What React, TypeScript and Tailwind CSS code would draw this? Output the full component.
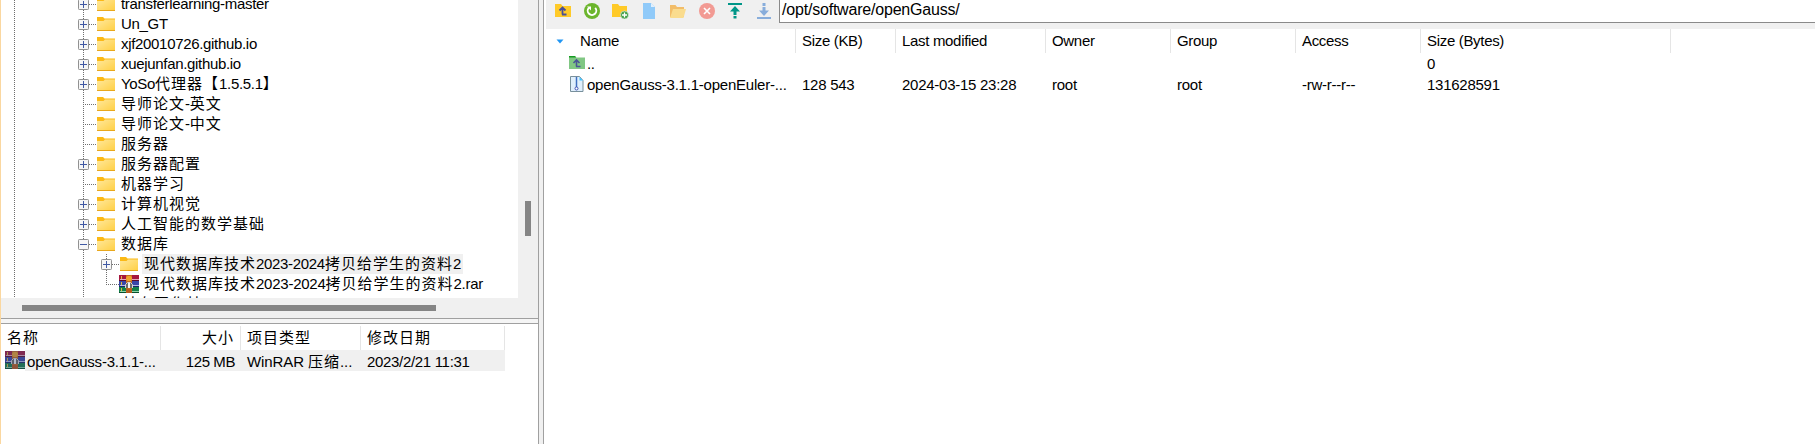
import React from "react";

const isCjk = /([\u2e80-\u3009\u300c-\u9fff]+)/;

function T({
  children,
  className = "",
  spacing = "tracking-[-0.32px]",
}: {
  children: string;
  className?: string;
  spacing?: string;
}) {
  return (
    <span className={"whitespace-pre text-[15px] leading-[20px] " + spacing + " " + className}>
      {children.split(isCjk).map((part, i) =>
        isCjk.test(part) ? (
          <span key={i} className="text-[15px] tracking-[1px]">{part}</span>
        ) : (
          <span key={i}>{part}</span>
        ),
      )}
    </span>
  );
}

function Folder() {
  return (
    <svg width="18" height="15" viewBox="0 0 18 15" className="block shrink-0">
      <defs>
        <linearGradient id="fold" x1="0" y1="0" x2="1" y2="1">
          <stop offset="0" stopColor="#ffe89c" />
          <stop offset="1" stopColor="#ffcf43" />
        </linearGradient>
      </defs>
      <path d="M0 0H6L7.500 1.500H18V5H0Z" fill="#fbb916" />
      <path d="M0 4H6.500L8 2.500H18V14H0Z" fill="url(#fold)" />
      <path d="M0 13H18V14H0Z" fill="#e9a81c" />
    </svg>
  );
}

function Rar({ selected = false }: { selected?: boolean }) {
  return (
    <svg width="20" height="18" viewBox="0 0 20 18" className="block shrink-0">
      <rect x="0" y="0" width="20" height="6" fill="#a5173f" />
      <rect x="1" y="4" width="19" height="1" fill="#e3a9bb" />
      <rect x="0" y="5" width="20" height="1" fill="#5f0a2a" />
      <rect x="0" y="6" width="20" height="6" fill="#3a46a8" />
      <rect x="1" y="10" width="19" height="1" fill="#b3bdea" />
      <rect x="0" y="11" width="20" height="1" fill="#1c2468" />
      <rect x="0" y="12" width="20" height="6" fill="#14804a" />
      <rect x="1" y="16" width="19" height="1" fill="#8fd3a8" />
      <rect x="0" y="17" width="20" height="1" fill="#07502b" />
      <path d="M2.500 1v3M2.500 7v3M2.500 13v3" stroke="#e0b93c" />
      <rect x="7" y="0" width="6" height="18" fill="#c46a20" />
      <rect x="7" y="1" width="6" height="5" rx="2" fill="#f0a52c" />
      <path d="M6.500 13V9.500L8.500 7.500h3l2 2V13" fill="#6b6b6b" stroke="#d9d9d9" />
      <rect x="9" y="8" width="2" height="5" fill="#f4f4f4" />
      <rect x="7" y="14" width="6" height="4" fill="#b85a1e" />
      {selected && <rect width="20" height="18" fill="#3b4b74" opacity=".35" />}
    </svg>
  );
}

function Expander({ open = false }: { open?: boolean }) {
  return (
    <svg width="11" height="11" viewBox="0 0 11 11" className="absolute -left-[5px] top-[5px] block">
      <rect x=".5" y=".5" width="10" height="10" rx=".8" fill="#f6f6f6" stroke="#919191" />
      <path d={open ? "M2 5.5H9" : "M2 5.5H9M5.500 2V9"} stroke="#4059a3" fill="none" />
    </svg>
  );
}

function VDots({ h = "h-[20px]" }: { h?: string }) {
  return (
    <div
      className={
        "w-px shrink-0 bg-[repeating-linear-gradient(to_bottom,#6e6e6e_0px,#6e6e6e_1px,transparent_1px,transparent_2px)] " + h
      }
    />
  );
}

function HDots() {
  return (
    <div className="mt-[10px] h-px w-[13px] shrink-0 bg-[repeating-linear-gradient(to_right,transparent_0px,transparent_1px,#6e6e6e_1px,#6e6e6e_2px)]" />
  );
}

function Guides() {
  return (
    <>
      <div className="w-[13px] shrink-0" />
      <VDots />
      <div className="w-[68px] shrink-0" />
    </>
  );
}

type Mark = "plus" | "minus" | "none";

function Node({ label, mark }: { label: string; mark: Mark }) {
  return (
    <div className="flex h-[20px] shrink-0">
      <Guides />
      <div className="relative flex w-[14px] shrink-0">
        <VDots />
        <HDots />
        {mark !== "none" && <Expander open={mark === "minus"} />}
      </div>
      <div className="pt-[3px]"><Folder /></div>
      <T className="pl-[6px]">{label}</T>
    </div>
  );
}

const nodes: [string, Mark][] = [
  ["transferlearning-master", "plus"],
  ["Un_GT", "plus"],
  ["xjf20010726.github.io", "plus"],
  ["xuejunfan.github.io", "plus"],
  ["YoSo代理器【1.5.5.1】", "plus"],
  ["导师论文-英文", "none"],
  ["导师论文-中文", "none"],
  ["服务器", "none"],
  ["服务器配置", "plus"],
  ["机器学习", "none"],
  ["计算机视觉", "plus"],
  ["人工智能的数学基础", "plus"],
  ["数据库", "minus"],
];

function Tree() {
  return (
    <div className="h-[298px] w-[517px] overflow-hidden bg-white">
      <div className="-mt-[6px] flex flex-col">
        {nodes.map(([label, mark]) => <Node key={label} label={label} mark={mark} />)}
        <div className="flex h-[20px] shrink-0">
          <Guides />
          <VDots />
          <div className="w-[22px] shrink-0" />
          <div className="relative flex w-[14px] shrink-0">
            <VDots />
            <HDots />
            <Expander />
          </div>
          <div className="pt-[3px]"><Folder /></div>
          <div className="ml-[4px] flex w-[321px] bg-[#f0f0f0] pl-[2px]"><T>现代数据库技术2023-2024拷贝给学生的资料2</T></div>
        </div>
        <div className="flex h-[20px] shrink-0">
          <Guides />
          <VDots />
          <div className="w-[22px] shrink-0" />
          <div className="flex w-[13px] shrink-0">
            <VDots h="h-[11px]" />
            <HDots />
          </div>
          <div className="pt-[1px]"><Rar /></div>
          <T className="pl-[5px]" spacing="tracking-[-0.25px]">现代数据库技术2023-2024拷贝给学生的资料2.rar</T>
        </div>
        <div className="flex h-[20px] shrink-0">
          <Guides />
          <VDots />
          <T className="pl-[38px]">其右图化其</T>
        </div>
      </div>
    </div>
  );
}

function LocalList() {
  return (
    <div className="flex h-[120px] flex-col bg-white">
      <div className="flex h-[26px] items-end">
        <div className="flex h-[24px] w-[160px] border-r border-[#e5e5e5] pl-[6px]"><T className="pt-[2px]">名称</T></div>
        <div className="flex h-[24px] w-[80px] justify-end border-r border-[#e5e5e5] pr-[6px]"><T className="pt-[2px]">大小</T></div>
        <div className="flex h-[24px] w-[120px] border-r border-[#e5e5e5] pl-[6px]"><T className="pt-[2px]">项目类型</T></div>
        <div className="flex h-[24px] w-[144px] border-r border-[#e5e5e5] pl-[6px]"><T className="pt-[2px]">修改日期</T></div>
      </div>
      <div className="flex h-[21px] items-start">
        <div className="w-[4px]" />
        <div className="pt-[1px]"><Rar selected /></div>
        <div className="flex h-[21px] w-[480px] bg-[#f0f0f0]">
          <T className="w-[136px] pl-[2px] pt-[2px]" spacing="tracking-[-0.2px]">openGauss-3.1.1-...</T>
          <T className="w-[74px] pt-[2px] text-right" spacing="tracking-[-0.42px]">125 MB</T>
          <T className="w-[132px] pl-[12px] pt-[2px]" spacing="tracking-[-0.1px]">WinRAR 压缩...</T>
          <T className="pt-[2px]">2023/2/21 11:31</T>
        </div>
      </div>
    </div>
  );
}

function Toolbar() {
  return (
    <div className="flex h-[29px] items-start bg-[#f0f0f0]">
      <svg width="233" height="29" viewBox="546 0 233 29" className="block shrink-0">
        <path d="M555 4h6l1.500 2H571v11H555z" fill="#ffca28" />
        <path d="M562.500 14.500V8M559.500 10.500l3-3 3 3M562 14.500h4.500" stroke="#4a4f96" strokeWidth="1.800" fill="none" />
        <circle cx="592" cy="11" r="8" fill="#6cb52d" />
        <path d="M595.200 7.800a4.300 4.300 0 1 1 -6.400 0" stroke="#fff" strokeWidth="1.900" fill="none" />
        <path d="M587 6.500h4v4z" fill="#fff" />
        <path d="M612 4h6l1.500 2H627v11H612z" fill="#ffca28" />
        <circle cx="624.500" cy="15" r="4" fill="#43a047" stroke="#f0f0f0" strokeWidth=".6" />
        <path d="M622 15h5M624.500 12.500v5" stroke="#fff" strokeWidth="1.300" />
        <path d="M643 3h8l4 4v12H643z" fill="#90caf9" />
        <path d="M651 3v4h4z" fill="#e1f0fd" />
        <path d="M670 5h5.500l1.500 2h7v10H670z" fill="#f2bd69" />
        <path d="M673 9h13l-2.500 9H670z" fill="#fadc8e" />
        <circle cx="707" cy="11" r="8" fill="#f29a93" />
        <path d="M704 8l6 6M710 8l-6 6" stroke="#fff" strokeWidth="1.600" />
        <path d="M728 3h14v2H728z" fill="#009688" />
        <path d="M735 6l5 5.500h-3.500V15h-3v-3.500H730zM733.500 16h3v2.500h-3z" fill="#009688" />
        <path d="M757 17h14v2H757z" fill="#88addb" />
        <path d="M764 16l-5-5.500h3.500V7h3v3.500H769zM762.500 3h3v3h-3z" fill="#88addb" />
      </svg>
      <div className="flex h-[23px] grow border-b border-l border-[#8a8a8a] bg-white pl-[2px]">
        <span className="whitespace-pre text-[16px] leading-[20px] tracking-[-0.2px]">/opt/software/openGauss/</span>
      </div>
    </div>
  );
}

function Cell({ w, head, up = "", file }: { w: string; head: string; up?: string; file: string }) {
  return (
    <div className={"flex shrink-0 flex-col " + w}>
      <div className="flex h-[24px] border-r border-[#e5e5e5] pl-[6px] pt-[2px]"><T>{head}</T></div>
      <div className="flex h-[22px] pl-[6px] pt-[1px]"><T>{up}</T></div>
      <div className="flex h-[22px] pl-[6px]"><T spacing="tracking-[-0.26px]">{file}</T></div>
    </div>
  );
}

function RemoteList() {
  return (
    <div className="flex bg-white">
      <div className="flex w-[250px] shrink-0 flex-col">
        <div className="flex h-[24px] border-r border-[#e5e5e5] pt-[2px]">
          <svg width="34" height="20" viewBox="0 0 34 20" className="block"><path d="M10.500 8.500h7L14 12.500z" fill="#2196f3" /></svg>
          <T spacing="tracking-[-0.2px]">Name</T>
        </div>
        <div className="flex h-[22px] pt-[1px]">
          <svg width="41" height="20" viewBox="0 0 41 20" className="block shrink-0">
            <path d="M23 2h6l1.500 1.500H39V15H23z" fill="#81c784" />
            <path d="M23 2h6l1 1.500h-7z" fill="#169b22" />
            <path d="M30.500 12.500V6.500M27.500 9l3-3 3 3M30 12.500h4.500" stroke="#4a5596" strokeWidth="1.600" fill="none" />
          </svg>
          <T>..</T>
        </div>
        <div className="flex h-[22px]">
          <svg width="41" height="20" viewBox="0 0 41 20" className="block shrink-0">
            <path d="M24.500 1.500h9l3.500 4v11h-12.500z" fill="#e0effc" stroke="#78909c" />
            <path d="M33.500 2v3.500H37z" fill="#40c4ff" />
            <path d="M30.500 2v10" stroke="#3f6fc0" strokeWidth="1.500" />
            <circle cx="30.500" cy="13.500" r="1.500" fill="#fff" stroke="#3f51b5" />
          </svg>
          <T spacing="tracking-[-0.22px]">openGauss-3.1.1-openEuler-...</T>
        </div>
      </div>
      <Cell w="w-[100px]" head="Size (KB)" file="128 543" />
      <Cell w="w-[150px]" head="Last modified" file="2024-03-15 23:28" />
      <Cell w="w-[125px]" head="Owner" file="root" />
      <Cell w="w-[125px]" head="Group" file="root" />
      <Cell w="w-[125px]" head="Access" file="-rw-r--r--" />
      <Cell w="w-[250px]" head="Size (Bytes)" up="0" file="131628591" />
    </div>
  );
}

export default function App() {
  return (
    <div className="flex h-[444px] w-[1815px] overflow-hidden bg-white font-['Liberation_Sans','Noto_Sans_CJK_SC',sans-serif] text-black">
      <div className="w-px shrink-0 bg-[#fad7a0]" />
      <div className="flex w-[537px] shrink-0 flex-col">
        <div className="flex h-[298px] bg-[#f0f0f0]">
          <Tree />
          <div className="pl-[7px] pt-[201px]"><div className="h-[35px] w-[6px] bg-[#858585]" /></div>
        </div>
        <div className="h-[20px] bg-[#f0f0f0] pl-[21px] pt-[7px]"><div className="h-[6px] w-[414px] bg-[#858585]" /></div>
        <div className="h-[6px] border-y border-[#a0a0a0] bg-[#f5f5f5]" />
        <LocalList />
      </div>
      <div className="w-[6px] shrink-0 border-x border-[#a0a0a0] bg-[#f0f0f0]" />
      <div className="w-[2px] shrink-0 bg-white" />
      <div className="flex grow flex-col">
        <Toolbar />
        <RemoteList />
      </div>
    </div>
  );
}
